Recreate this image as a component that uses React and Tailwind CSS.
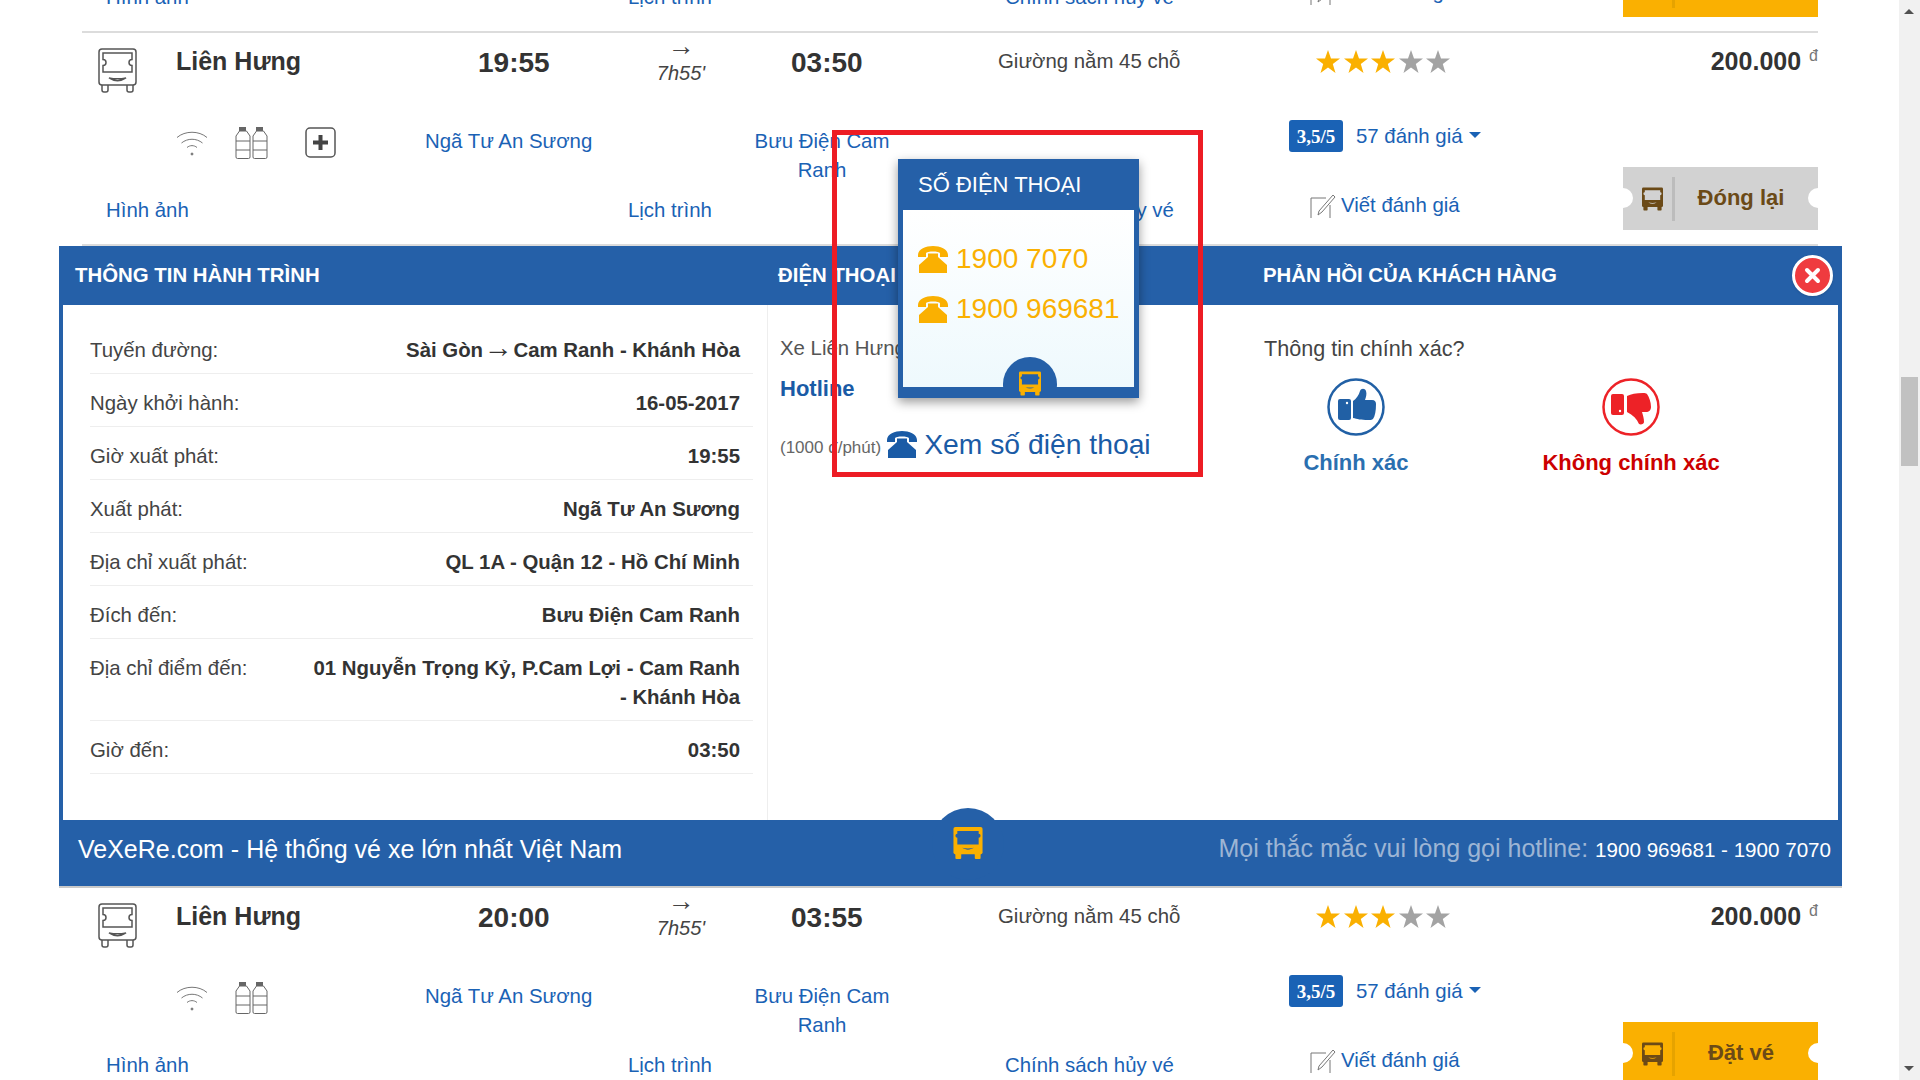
const BusOutline = () => (
  <svg width="39" height="45" viewBox="0 0 39 45" fill="none" stroke="#555" strokeWidth="1.5">
    <rect x="1" y="1" width="37" height="36" rx="3" />
    <path d="M5 5h29v6.500a2 2 0 0 0 0 6V24H5v-6.500a2 2 0 0 0 0-6z" />
    <path d="M11 30c5 3.500 12 3.500 17 0-5 1-12 1-17 0z" />
    <path d="M4 37v5a2 2 0 0 0 2 2h2a2 2 0 0 0 2-2v-5M29 37v5a2 2 0 0 0 2 2h2a2 2 0 0 0 2-2v-5" />
  </svg>
);

const BusSolid = ({ color, glass, className }) => (
  <svg className={className} viewBox="0 0 30 33" fill={color}>
    <rect x="0" y="0" width="30" height="28" rx="2" />
    <path d="M4 4h22v3a1.500 1.500 0 0 1 0 4v7H4v-7a1.500 1.500 0 0 1 0-4z" fill={glass} />
    <path d="M9 21.500c4 2.500 8 2.500 12 0-4 .8-8 .8-12 0z" fill={glass} />
    <rect x="2" y="27" width="6" height="6" rx="1" />
    <rect x="22" y="27" width="6" height="6" rx="1" />
  </svg>
);

const Wifi = () => (
  <svg width="32" height="26" viewBox="0 0 32 26" fill="none" stroke="#777" strokeWidth="1">
    <path d="M1 7.500c8-7 22-7 30 0" />
    <path d="M5.500 13c6-5 15-5 21 0" />
    <path d="M11 17.500c3-2.500 7-2.500 10 0" />
    <circle cx="16" cy="24" r="1" fill="#777" />
  </svg>
);

const Bottles = () => (
  <svg width="33" height="32" viewBox="0 0 33 32" fill="none" stroke="#666" strokeWidth="1">
    <rect x="4.500" y="0.500" width="6" height="3" fill="#666" />
    <rect x="21.500" y="0.500" width="6" height="3" fill="#666" />
    <path d="M4.500 4 1 9v21a1.500 1.500 0 0 0 1.500 1.500h11A1.500 1.500 0 0 0 15 30V9l-3.500-5zM1 14h14M1 23h14" />
    <path d="M21.500 4 18 9v21a1.500 1.500 0 0 0 1.500 1.500h11A1.500 1.500 0 0 0 32 30V9l-3.500-5zM18 14h14M18 23h14" />
  </svg>
);

const PlusBox = () => (
  <svg width="31" height="31" viewBox="0 0 31 31">
    <rect x="1" y="1" width="29" height="29" rx="4" fill="none" stroke="#555" strokeWidth="1.500" />
    <path d="M13.500 8h4v5.500H23v4h-5.500V23h-4v-5.500H8v-4h5.500z" fill="#444" />
  </svg>
);

const NoteIcon = () => (
  <svg width="26" height="24" viewBox="0 0 26 24" fill="none" stroke="#777" strokeWidth="1">
    <path d="M1 24V4h15M20 11v13" />
    <path d="M9 17 23 1l2 2-13 15-4 3z" fill="#fff" />
  </svg>
);

const Phone = ({ color, className }) => (
  <svg className={className} viewBox="0 0 30 27" fill={color}>
    <path d="M0 9C0 3 8 0 15 0s15 3 15 9v2h-8V7.500C22 6 18 5.500 15 5.500S8 6 8 7.500V11H0z" />
    <path d="M10 7.500h10V11l9 8v8H1v-8l9-8z" />
  </svg>
);

const Star = ({ color }) => (
  <svg width="24" height="23" viewBox="0 0 24 23" fill={color}>
    <path d="M12 0l3 8.500h9L16.800 14l2.700 9L12 17.500 4.500 23l2.700-9L0 8.500h9z" />
  </svg>
);

const ThumbUp = () => (
  <svg width="58" height="58" viewBox="0 0 58 58">
    <circle cx="29" cy="29" r="27.500" fill="#fff" stroke="#2160a5" strokeWidth="2.500" />
    <path d="M11 23a2 2 0 0 1 2-2h9a2 2 0 0 1 2 2v17a2 2 0 0 1-2 2h-9a2 2 0 0 1-2-2z" fill="#2160a5" />
    <circle cx="20" cy="25" r="1.200" fill="#fff" />
    <path d="M26 23c3-2 6-6 7-10 1-3 5-3 6 0 1 3 0 6-1 9h7c3 0 4 2 4 4 0 7-1 12-3 15-1 1-3 1-5 1-7 0-11-1-15-2z" fill="#2160a5" />
  </svg>
);

const ThumbDown = () => (
  <svg width="58" height="58" viewBox="0 0 58 58">
    <circle cx="29" cy="29" r="27.500" fill="#fff" stroke="#ed2227" strokeWidth="2.500" />
    <path d="M9 18a2 2 0 0 1 2-2h9a2 2 0 0 1 2 2v17a2 2 0 0 1-2 2h-9a2 2 0 0 1-2-2z" fill="#ed2227" />
    <circle cx="18" cy="33" r="1.200" fill="#fff" />
    <path d="M25 18c4-2 9-3 16-3 2 0 3 0 4 1 2 3 4 8 4 13 0 3-2 5-5 5h-4c1 3 2 7 2 10 0 2-3 3-5 2-2-5-6-9-12-12z" fill="#ed2227" />
  </svg>
);

const TripRow = ({ time, arrive, plus, bookLabel, closed }) => (
  <div className="h-[213px] border-b-2 border-[#dcdcdc] text-[20.4px] leading-[29px] text-[#1a62b5]">
    <div className="flex h-[94px] items-start">
      <div className="w-[94px] pl-4 pt-[15px]">
        <BusOutline />
      </div>
      <div className="w-[260px] pt-[14px] text-[25px] font-bold text-[#333]">Liên Hưng</div>
      <div className="w-[154px] pl-[42px] pt-[15px] text-[28px] font-bold text-[#333]">{time}</div>
      <div className="w-[184px] pl-[65px] text-center text-[#444]">
        <div className="h-[27px] w-[52px] text-[27px] leading-[26px]">→</div>
        <div className="w-[52px] text-[20px] italic leading-[26px]">7h55'</div>
      </div>
      <div className="w-[106px] pl-[17px] pt-[15px] text-[28px] font-bold text-[#333]">{arrive}</div>
      <div className="w-[418px] pl-[118px] pt-[14px] text-[#444]">Giường nằm 45 chỗ</div>
      <div className="flex w-[170px] gap-[3.500px] pl-[18px] pt-[17px]">
        <Star color="#fab001" />
        <Star color="#fab001" />
        <Star color="#fab001" />
        <Star color="#a3a3a3" />
        <Star color="#a3a3a3" />
      </div>
      <div className="flex flex-1 justify-end gap-[8px] pt-[14px] text-[#333]">
        <span className="text-[25px] font-bold">200.000</span>
        <span className="text-[16px] leading-[18px] text-[#777]">đ</span>
      </div>
    </div>
    <div className="flex h-[40px] items-start">
      <div className="flex w-[343px] gap-[27px] pl-[94px]">
        <span className="pt-[3px]">
          <Wifi />
        </span>
        <Bottles />
        {plus && <span className="ml-[10px]"><PlusBox /></span>}
      </div>
      <div className="w-[317px]">Ngã Tư An Sương</div>
      <div className="w-[160px] text-center">Bưu Điện Cam Ranh</div>
      <div className="flex w-[441px] justify-end">
        <span className="mt-[-7px] flex h-[32px] w-[54px] items-center justify-center rounded-[3px] bg-[#1a62b5] font-['Liberation_Serif'] text-[19px] font-bold text-white">
          3,5/5
        </span>
      </div>
      <div className="ml-[13px] mt-[-5px] flex items-center gap-[6px]">
        57 đánh giá
        <span className="mb-[3px] h-0 w-0 border-x-[6px] border-t-[6px] border-x-transparent border-t-[#1a62b5]" />
      </div>
    </div>
    <div className="flex h-[63px] items-start">
      <div className="w-[546px] pl-6 pt-[29px]">Hình ảnh</div>
      <div className="w-[377px] pt-[29px]">Lịch trình</div>
      <div className="w-[305px] pt-[29px]">Chính sách hủy vé</div>
      <div className="flex w-[313px] items-center gap-[5px] pt-[24px]">
        <NoteIcon />
        Viết đánh giá
      </div>
      <div
        className={
          closed
            ? "relative flex h-[63px] w-[195px] items-center bg-[#d2d2d2] text-[#6b4a17]"
            : "relative flex h-[63px] w-[195px] items-center bg-[#fab001] text-[#6b4a17]"
        }
      >
        <span className="absolute left-[-10px] top-[21px] h-[20px] w-[20px] rounded-full bg-white" />
        <span className="absolute right-[-10px] top-[21px] h-[20px] w-[20px] rounded-full bg-white" />
        <BusSolid color="#6b4a17" glass={closed ? "#d2d2d2" : "#fab001"} className="ml-[19px] h-[24px] w-[21px]" />
        <span className={closed ? "ml-[9px] h-[44px] w-[3px] bg-[#bcbcbc]" : "ml-[9px] h-[44px] w-[3px] bg-[#e6a300]"} />
        <span className="flex-1 pb-[2px] pr-[11px] text-center text-[22px] font-bold">{bookLabel}</span>
      </div>
    </div>
  </div>
);

const infoRows = [
  ["Tuyến đường:", <>Sài Gòn <span className="mx-[-5px] text-[29px] font-normal leading-[0]">→</span> Cam Ranh - Khánh Hòa</>],
  ["Ngày khởi hành:", "16-05-2017"],
  ["Giờ xuất phát:", "19:55"],
  ["Xuất phát:", "Ngã Tư An Sương"],
  ["Địa chỉ xuất phát:", "QL 1A - Quận 12 - Hồ Chí Minh"],
  ["Đích đến:", "Bưu Điện Cam Ranh"],
  ["Địa chỉ điểm đến:", "01 Nguyễn Trọng Kỷ, P.Cam Lợi - Cam Ranh - Khánh Hòa"],
  ["Giờ đến:", "03:50"],
];

const DetailPanel = () => (
  <div className="relative ml-[-23px] mr-[-24px] text-[20.4px] leading-[29px]">
    <div className="flex h-[59px] items-center bg-[#2560a8] font-bold text-white">
      <div className="w-[719px] pl-4">THÔNG TIN HÀNH TRÌNH</div>
      <div className="w-[485px]">ĐIỆN THOẠI</div>
      <div>PHẢN HỒI CỦA KHÁCH HÀNG</div>
      <span className="absolute right-[9px] top-[9px] flex h-[41px] w-[41px] items-center justify-center rounded-full border-[3px] border-white bg-[#ef3b3f] shadow">
        <svg width="17" height="17" viewBox="0 0 17 17" stroke="#fff" strokeWidth="4" strokeLinecap="round">
          <path d="M3 3l11 11M14 3L3 14" />
        </svg>
      </span>
    </div>
    <div className="flex h-[515px] border-x-4 border-[#2560a8] bg-white">
      <div className="w-[705px] border-r border-[#eeeeee] pl-[27px] pr-[14px] pt-[16px]">
        {infoRows.map((row) => (
          <div key={row[0]} className="flex justify-between gap-6 border-b border-[#eeeeee] pb-[8px] pr-[13px] pt-[15px] text-[#444]">
            <span className="shrink-0">{row[0]}</span>
            <span className="max-w-[436px] text-right font-bold text-[#333]">{row[1]}</span>
          </div>
        ))}
      </div>
      <div className="w-[496px] pl-[12px] pt-[29px] text-[#444]">
        <div className="text-[#555]">Xe Liên Hưng</div>
        <div className="mt-[11px] text-[22px] font-bold text-[#1a5ba6]">Hotline</div>
        <div className="mt-[21px] flex items-center">
          <span className="mt-[7px] text-[17px] text-[#666]">(1000 đ/phút)</span>
          <Phone color="#1a5ba6" className="ml-[6px] h-[27px] w-[30px]" />
          <span className="ml-[7px] text-[28.300px] leading-[40px] text-[#1a5ba6]">Xem số điện thoại</span>
        </div>
      </div>
      <div className="flex-1 pt-[29px] text-[#444]">
        <div className="text-[21.600px]">Thông tin chính xác?</div>
        <div className="mt-[15px] flex">
          <div className="flex w-[184px] flex-col items-center gap-[12px] text-[22px] font-bold text-[#2a6fb0]">
            <ThumbUp />
            Chính xác
          </div>
          <div className="ml-[91px] flex w-[184px] flex-col items-center gap-[12px] text-[22px] font-bold text-[#cc0000]">
            <ThumbDown />
            <span className="whitespace-nowrap">Không chính xác</span>
          </div>
        </div>
      </div>
    </div>
    <div className="relative flex h-[68px] items-center justify-between border-b-2 border-[#c9c9c9] bg-[#2560a8] pb-[8px] pl-[19px] pr-[11px] text-[25px] text-white">
      <span>VeXeRe.com - Hệ thống vé xe lớn nhất Việt Nam</span>
      <span className="absolute left-[873px] top-[-12px] flex h-[72px] w-[72px] justify-center rounded-full bg-[#2560a8] pt-[19px]">
        <BusSolid color="#fab001" glass="#2560a8" className="h-[32px] w-[30px]" />
      </span>
      <span className="text-[#9db5d4]">
        Mọi thắc mắc vui lòng gọi hotline:{" "}
        <span className="text-[20.600px] text-white">1900 969681 - 1900 7070</span>
      </span>
    </div>
  </div>
);

const PhonePopup = () => (
  <div className="absolute left-[898px] top-[159px] w-[241px] bg-[#2560a8] shadow-[0_4px_10px_rgba(0,0,0,0.4)]">
    <div className="flex h-[51px] items-center pl-[20px] text-[22px] text-white">SỐ ĐIỆN THOẠI</div>
    <div className="relative mx-[5px] h-[177px] overflow-hidden bg-gradient-to-b from-white to-[#eef9fd] pl-[15px] pt-[24px] text-[28px] leading-[50px] text-[#fab001]">
      <div className="flex items-center gap-[8px]">
        <Phone color="#fab001" className="h-[27px] w-[30px]" />
        1900 7070
      </div>
      <div className="flex items-center gap-[8px]">
        <Phone color="#fab001" className="h-[27px] w-[30px]" />
        1900 969681
      </div>
      <span className="absolute left-[100px] top-[147px] h-[54px] w-[54px] rounded-full bg-[#2560a8]" />
    </div>
    <div className="h-[11px]" />
    <BusSolid color="#fab001" glass="#2560a8" className="absolute left-[121px] top-[212px] h-[25px] w-[22px]" />
  </div>
);

export default function App() {
  return (
    <div className="relative flex h-[1080px] w-[1920px] overflow-hidden bg-white font-['Liberation_Sans',Arial,sans-serif]">
      <main className="w-[1899px] shrink-0 pl-[82px] pr-[81px]">
        <div className="mt-[-180px]">
          <TripRow time="19:00" arrive="02:55" bookLabel="Đặt vé" />
          <TripRow time="19:55" arrive="03:50" plus bookLabel="Đóng lại" closed />
          <DetailPanel />
          <TripRow time="20:00" arrive="03:55" bookLabel="Đặt vé" />
        </div>
      </main>
      <aside className="relative flex-1 bg-[#f1f1f1]">
        <span className="absolute left-[5px] top-[9px] h-0 w-0 border-x-[5px] border-b-[5px] border-x-transparent border-b-[#505050]" />
        <span className="absolute left-[2px] top-[377px] h-[89px] w-[17px] bg-[#c1c1c1]" />
        <span className="absolute bottom-[9px] left-[5px] h-0 w-0 border-x-[5px] border-t-[5px] border-x-transparent border-t-[#505050]" />
      </aside>
      <PhonePopup />
      <div className="pointer-events-none absolute left-[832px] top-[130px] h-[347px] w-[371px] border-[5px] border-[#ed1c24]" />
    </div>
  );
}
